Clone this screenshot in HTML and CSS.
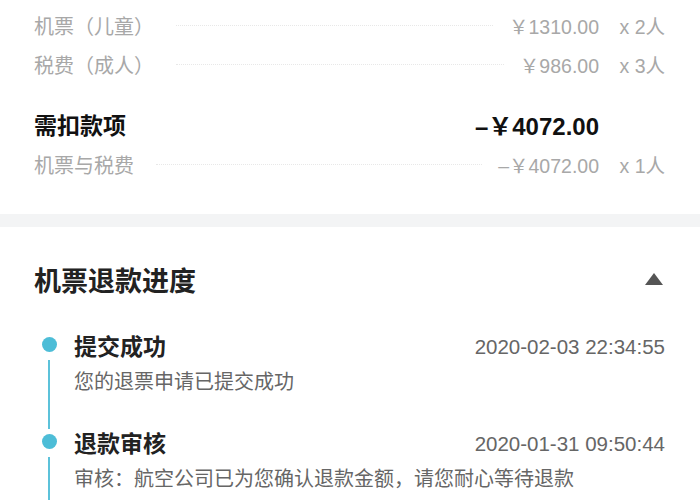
FILE: index.html
```html
<!DOCTYPE html>
<html lang="zh-CN">
<head>
	<meta charset="UTF-8">
	<title>退款详情</title>
<link rel="stylesheet" href="styles.css">
</head>
<body>
	<div class="fees">
		<div class="row">
			<span class="label">机票（儿童）</span>
			<span class="dots"></span>
			<span class="price">￥1310.00</span>
			<span class="qty">x 2人</span>
		</div>
		<div class="row">
			<span class="label">税费（成人）</span>
			<span class="dots"></span>
			<span class="price">￥986.00</span>
			<span class="qty">x 3人</span>
		</div>
		<div class="row total">
			<span class="label">需扣款项</span>
			<span class="price">–￥4072.00</span>
			<span class="qty"></span>
		</div>
		<div class="row">
			<span class="label">机票与税费</span>
			<span class="dots"></span>
			<span class="price">–￥4072.00</span>
			<span class="qty">x 1人</span>
		</div>
	</div>

	<div class="band"></div>

	<div class="progress">
		<div class="head">
			<h2>机票退款进度</h2>
			<span class="arrow"></span>
		</div>
		<ul class="steps">
			<li class="step">
				<div class="rail"><i class="dot"></i><i class="line"></i></div>
				<div class="body">
					<div class="title">
						<b>提交成功</b>
						<span class="time">2020-02-03 22:34:55</span>
					</div>
					<p>您的退票申请已提交成功</p>
				</div>
			</li>
			<li class="step">
				<div class="rail"><i class="dot"></i><i class="line"></i></div>
				<div class="body">
					<div class="title">
						<b>退款审核</b>
						<span class="time">2020-01-31 09:50:44</span>
					</div>
					<p>审核：航空公司已为您确认退款金额，请您耐心等待退款</p>
				</div>
			</li>
		</ul>
	</div>
</body>
</html>
```
FILE: styles.css
```css
*{margin: 0;padding: 0;list-style: none}
html{overflow: hidden}
body{
	width: 700px;
	height: 500px;
	overflow: hidden;
	background: #fff;
	font-family: "Liberation Sans", "Noto Sans CJK SC", sans-serif;
	color: #222;
}
.fees{
	padding: 6px 35px 30px 34px;
}
.fees .row{
	display: flex;
	align-items: center;
	height: 39px;
	font-size: 19.5px;
	color: #a8a8a8;
}
.fees .label{
	font-size: 20px;
}
.fees .dots{
	flex: 1;
	height: 0;
	border-bottom: 1px dotted #e8e8e8;
	margin: 0 16px 0 22px;
}
.fees .qty{
	width: 50px;
	margin-left: 16px;
	text-align: right;
}
.fees .total{
	height: 40px;
	margin: 20px 0 1px;
	color: #111;
}
.fees .total .label{
	flex: 1;
	font-size: 23px;
	font-weight: bold;
}
.fees .total .price{
	font-size: 24px;
	font-weight: bold;
}
.band{
	height: 13px;
	background: #f3f4f5;
}
.progress{
	padding: 32px 35px 0 34px;
}
.progress .head{
	display: flex;
	align-items: center;
	justify-content: space-between;
	height: 40px;
}
.progress h2{
	font-size: 27px;
	font-weight: bold;
	color: #222;
}
.progress .arrow{
	width: 0;
	height: 0;
	border-left: 9px solid transparent;
	border-right: 9px solid transparent;
	border-bottom: 12px solid #555;
	margin-right: 2px;
}
.steps{
	margin-top: 28px;
}
.step{
	display: grid;
	grid-template-columns: 30px 1fr;
	column-gap: 10px;
	height: 97px;
}
.rail{
	display: flex;
	flex-direction: column;
	align-items: center;
}
.rail .dot{
	width: 15px;
	height: 15px;
	margin-top: 10px;
	border-radius: 50%;
	background: #4dbdd7;
}
.rail .line{
	flex: 1;
	width: 2px;
	margin: 8px 0 -5px;
	background: #5cc2da;
}
.step .title{
	display: flex;
	align-items: center;
	justify-content: space-between;
	height: 36px;
}
.step .title b{
	font-size: 23px;
	font-weight: bold;
	color: #222;
}
.step .time{
	padding-top: 3px;
	font-size: 20.5px;
	color: #666;
}
.step p{
	line-height: 38px;
	font-size: 20px;
	color: #666;
}
```
